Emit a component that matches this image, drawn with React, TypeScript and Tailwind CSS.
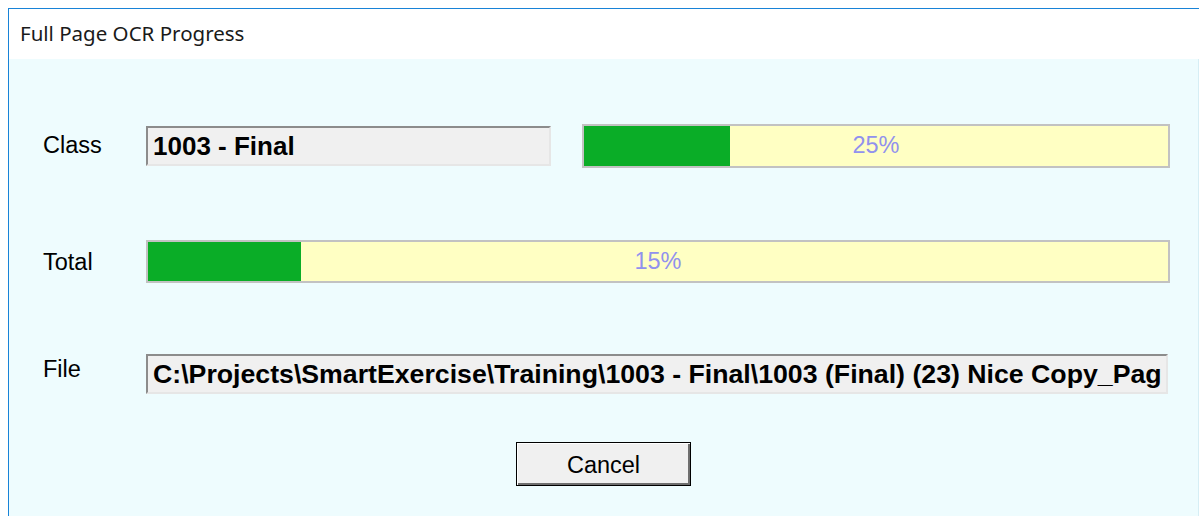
const SANS = "font-['Liberation_Sans',Arial,sans-serif]";

function Bar({ pct, className = "" }: { pct: number; className?: string }) {
  return (
    <div className={`relative border-2 border-[#c2c2c2] bg-[#ffffc3] ${className}`}>
      <div className="h-full bg-[#0aad27]" style={{ width: `${pct}%` }} />
      <span className="absolute inset-0 flex items-center justify-center text-[23.5px] text-[#9191ee]">{pct}%</span>
    </div>
  );
}

function Field({ value, className = "" }: { value: string; className?: string }) {
  return (
    <div
      className={`flex items-center overflow-hidden whitespace-nowrap border-2 border-t-[#8c8c8c] border-l-[#8c8c8c] border-b-[#e6e6e6] border-r-[#e6e6e6] bg-[#f0f0f0] pl-[5px] font-bold text-black ${className}`}
    >
      {value}
    </div>
  );
}

export default function App() {
  return (
    <div className={`h-[516px] w-[1199px] bg-white pl-2 pt-2 ${SANS}`}>
      <div className="flex h-full flex-col border-l border-t border-[#1883d7]">
        <div className="flex h-[50px] items-center bg-white pl-[11px] pb-[2px] font-['Noto_Sans',sans-serif] text-[20.5px] text-[#1a1a1a]">
          Full Page OCR Progress
        </div>
        <div className="flex flex-1 flex-col border-r border-[#d6eef5] bg-[#eefcfe] pl-[34px] pr-[28px] pt-[65px] text-[23.5px] text-black">
          <div className="flex items-center">
            <span className="w-[103px]">Class</span>
            <Field value="1003 - Final" className="h-[40px] w-[405px] text-[26px]" />
            <Bar pct={25} className="ml-[31px] h-[44px] flex-1" />
          </div>
          <div className="mt-[72px] flex items-center">
            <span className="mt-[2px] w-[103px]">Total</span>
            <Bar pct={15} className="h-[43px] flex-1" />
          </div>
          <div className="mt-[71px] flex items-start">
            <span className="-mt-[2px] w-[103px]">File</span>
            <Field
              value="C:\Projects\SmartExercise\Training\1003 - Final\1003 (Final) (23) Nice Copy_Pag"
              className="mr-[2px] h-[40px] flex-1 text-[26.7px]"
            />
          </div>
          <div className="mt-[48px] flex justify-center pr-[6px]">
            <button
              type="button"
              className="h-[44px] w-[175px] border border-black bg-[#f0f0f0] pt-[3px] text-[23.5px] text-black shadow-[inset_1px_1px_0_#ffffff,inset_-2px_-2px_0_#6e6e6e]"
            >
              Cancel
            </button>
          </div>
        </div>
      </div>
    </div>
  );
}
